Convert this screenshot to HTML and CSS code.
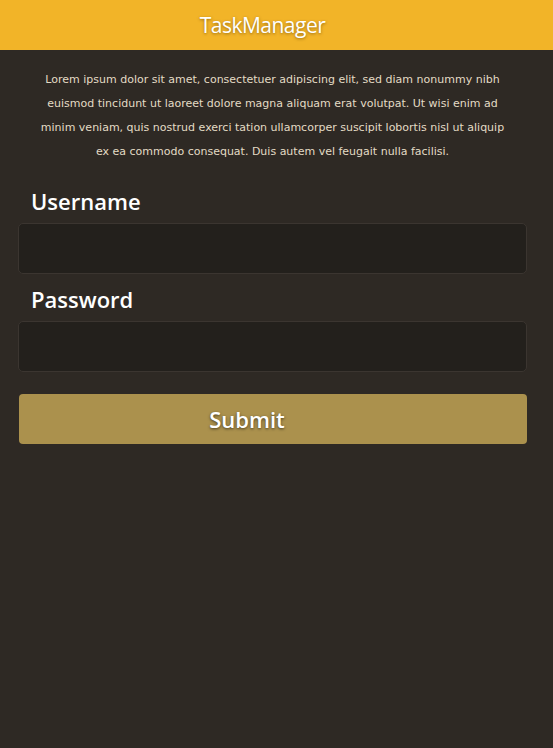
FILE: index.html
```html
<!DOCTYPE html>
<html>
<head>
<meta charset="utf-8">
<link rel="stylesheet" href="styles.css">
</head>
<body>
<header class="topbar"><h1 class="title">TaskManager</h1></header>
<main class="content">
<p class="intro">Lorem ipsum dolor sit amet, consectetuer adipiscing elit, sed diam nonummy nibh<br>euismod tincidunt ut laoreet dolore magna aliquam erat volutpat. Ut wisi enim ad<br>minim veniam, quis nostrud exerci tation ullamcorper suscipit lobortis nisl ut aliquip<br>ex ea commodo consequat. Duis autem vel feugait nulla facilisi.</p>
<form class="login">
<label class="label" for="u">Username</label>
<input class="field" id="u" type="text">
<label class="label" for="p">Password</label>
<input class="field" id="p" type="password">
<button class="submit" type="button">Submit</button>
</form>
</main>
</body>
</html>
```
FILE: styles.css
```css
html, body { margin: 0; padding: 0; }
body {
  background: #2e2924;
  width: 553px;
  height: 748px;
  font-family: "DejaVu Sans", sans-serif;
}
.topbar {
  height: 50px;
  background: #f2b428;
  display: flex;
  align-items: center;
  justify-content: center;
}
.title {
  margin: 0;
  padding-right: 28px;
  font-family: "Open Sans", sans-serif;
  font-weight: 400;
  font-size: 21px;
  color: #fff;
  text-shadow: 0 1px 3px rgba(90, 60, 0, 0.6);
  letter-spacing: -0.5px;
}
.content { padding: 0 26px 0 18px; }
.intro {
  margin: 18px 0 0;
  text-align: center;
  font-size: 11px;
  line-height: 24px;
  color: #e3dbc4;
}
.login { display: flex; flex-direction: column; margin-top: 24px; }
.label {
  font-family: "Open Sans", sans-serif;
  font-weight: 600;
  font-size: 22px;
  color: #fff;
  margin: 0 0 9px 13px;
  line-height: 26px;
}
.field {
  box-sizing: border-box;
  height: 51px;
  width: 509px;
  background: #23201c;
  border: 1px solid #3b3530;
  border-radius: 5px;
  margin: 0 0 12px;
}
.submit {
  margin-top: 10px;
  width: 508px;
  height: 50px;
  margin-left: 1px;
  padding: 0 52px 0 0;
  background: #ab914d;
  border: none;
  border-radius: 4px;
  color: #fff;
  font-family: "Open Sans", sans-serif;
  font-weight: 600;
  font-size: 22px;
  text-shadow: 0 1px 3px rgba(0, 0, 0, 0.6);
}
```
